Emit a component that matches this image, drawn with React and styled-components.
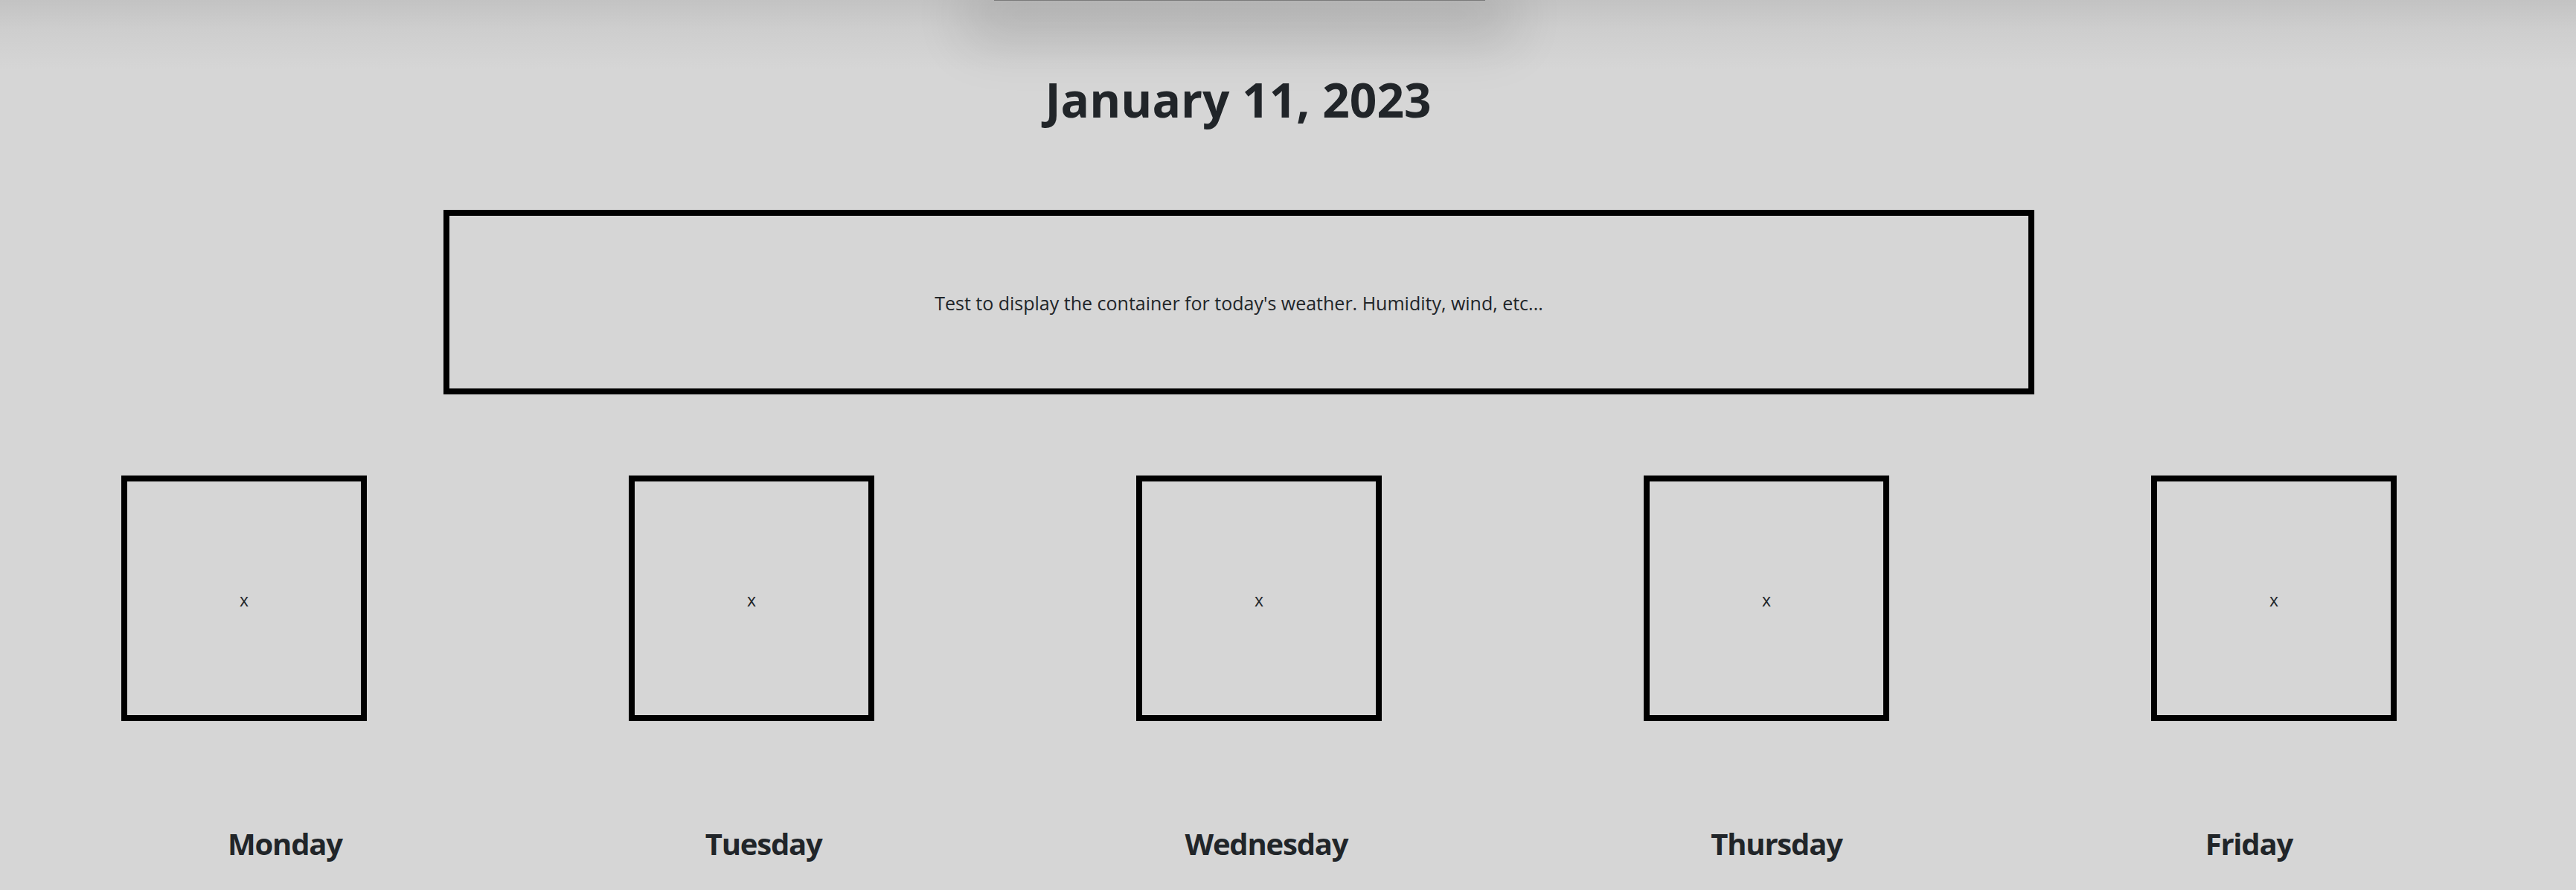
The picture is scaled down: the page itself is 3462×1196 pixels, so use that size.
import React from "react";
import styled, { createGlobalStyle } from "styled-components";

const GlobalStyle = createGlobalStyle`
  html, body {
    margin: 0;
    padding: 0;
    background-color: #d6d6d6;
  }
  body {
    font-family: "Open Sans", "Noto Sans", "Liberation Sans", sans-serif;
    color: #212529;
    min-height: 1196px;
    background-image: linear-gradient(to bottom, #c3c3c3 0px, #cecece 40px, #d6d6d6 95px);
    background-repeat: no-repeat;
    overflow: hidden;
  }
`;

const Page = styled.div`
  width: 3462px;
  display: flex;
  flex-direction: column;
`;

const TopBar = styled.div`
  align-self: flex-start;
  margin-left: 1336px;
  width: 660px;
  height: 1px;
  background: #7a7a7a;
  box-shadow: 0 20px 70px 40px rgba(0, 0, 0, 0.11);
`;

const Title = styled.h1`
  margin: 95px 0 0 1402px;
  font-size: 64px;
  line-height: 1.2;
  font-weight: 700;
  width: 524px;
  text-align: center;
  white-space: nowrap;
  color: #212529;
`;

const TodayPanel = styled.section`
  box-sizing: border-box;
  margin: 109px 0 0 596px;
  width: 2138px;
  height: 248px;
  border: 8px solid #000;
  display: flex;
  align-items: center;
  justify-content: center;
  padding-top: 2px;
  font-size: 25px;
  color: #212529;
`;

const BoxRow = styled.div`
  display: flex;
  gap: 352px;
  margin-top: 109px;
  padding-left: 163px;
`;

const DayBox = styled.div`
  box-sizing: border-box;
  width: 330px;
  height: 330px;
  border: 8px solid #000;
  display: flex;
  align-items: center;
  justify-content: center;
  padding-top: 4px;
  font-size: 23px;
  color: #212529;
`;

const LabelRow = styled.div`
  display: flex;
  justify-content: space-between;
  margin-top: 141px;
  padding-left: 306px;
  padding-right: 381px;
`;

const DayLabel = styled.h3`
  margin: 0;
  font-size: 40px;
  line-height: 1.2;
  font-weight: 700;
  letter-spacing: -1.2px;
  color: #212529;
`;

const days = ["Monday", "Tuesday", "Wednesday", "Thursday", "Friday"];

export default function App() {
  return (
    <>
      <GlobalStyle />
      <Page>
        <TopBar />
        <Title>January 11, 2023</Title>
        <TodayPanel>
          Test to display the container for today's weather. Humidity, wind, etc...
        </TodayPanel>
        <BoxRow>
          {days.map((d) => (
            <DayBox key={d}>x</DayBox>
          ))}
        </BoxRow>
        <LabelRow>
          {days.map((d) => (
            <DayLabel key={d}>{d}</DayLabel>
          ))}
        </LabelRow>
      </Page>
    </>
  );
}
